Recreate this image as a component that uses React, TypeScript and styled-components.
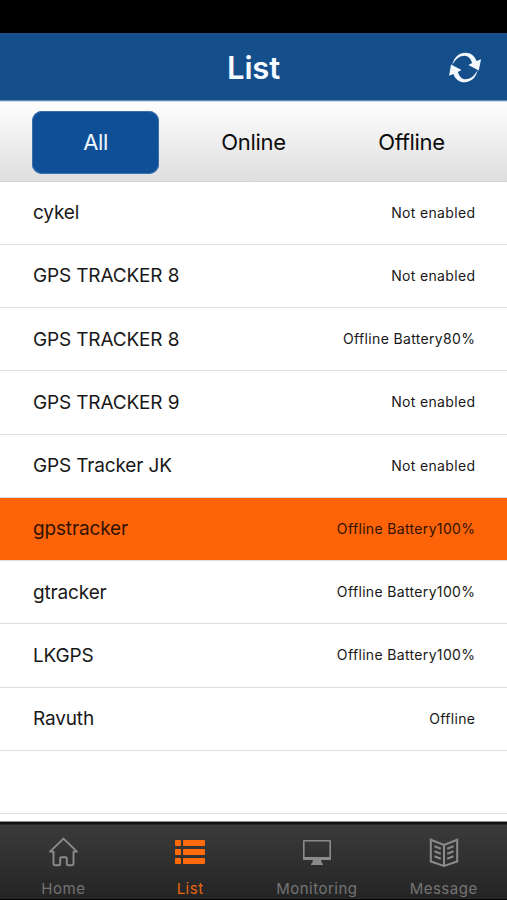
import React from 'react';
import styled, { createGlobalStyle } from 'styled-components';

const GlobalStyle = createGlobalStyle`
  * { box-sizing: border-box; }
  body { margin: 0; background: #000; }
  button { border: 0; padding: 0; background: none; font: inherit; color: inherit; }
`;

const Screen = styled.main`
  width: 507px;
  height: 900px;
  display: flex;
  flex-direction: column;
  overflow: hidden;
  background: #fff;
  color: #151515;
  font-family: Inter, 'Liberation Sans', sans-serif;
`;

const StatusBar = styled.div`
  height: 33px;
  flex: none;
  background: #000;
`;

const Header = styled.header`
  height: 69px;
  flex: none;
  display: grid;
  grid-template-columns: 1fr auto 1fr;
  align-items: center;
  background: linear-gradient(#1b5189 0, #154f8b 4px, #154f8b 67px, #6690b5 67px, #6690b5 68px, #c9dbe7 68px);
`;

const Title = styled.h1`
  grid-column: 2;
  margin: 0;
  color: #f4faff;
  font-size: 31px;
  line-height: 38px;
  font-weight: 600;
  letter-spacing: -0.2px;
`;

const Refresh = styled.button`
  justify-self: end;
  width: 34px;
  height: 31px;
  margin-right: 25px;
  svg { display: block; }
`;

const Filters = styled.nav`
  height: 79.5px;
  flex: none;
  display: flex;
  justify-content: space-between;
  padding: 9px 32px 0;
  background: linear-gradient(#fefefe, #dedede);
  border-bottom: 1px solid #d4d4d4;
`;

const Filter = styled.button<{ $active?: boolean }>`
  width: 127px;
  height: 63px;
  padding-bottom: 1px;
  border-radius: 10px;
  font-size: 22px;
  letter-spacing: ${p => (p.$active ? '-0.4px' : '-0.3px')};
  color: ${p => (p.$active ? '#eef6ff' : '#0c0c0c')};
  background: ${p => (p.$active ? '#0e4f97' : 'transparent')};
  box-shadow: ${p => (p.$active ? 'inset 0 0 0 1px #3a70ab' : 'none')};
`;

const Devices = styled.ul`
  flex: 1;
  min-height: 0;
  margin: 0;
  padding: 0;
  list-style: none;
`;

const Device = styled.li<{ $selected?: boolean }>`
  height: 63.25px;
  display: flex;
  align-items: center;
  justify-content: space-between;
  padding: 0 32px 0 33px;
  border-bottom: 1px solid #dedede;
  background: ${p => (p.$selected ? '#fd640a' : '#fff')};
  color: ${p => (p.$selected ? '#301300' : '#181818')};
`;

const DeviceName = styled.span`
  font-size: 19px;
  letter-spacing: -0.15px;
`;

const DeviceStatus = styled.span`
  font-size: 14px;
  padding-bottom: 1px;
  letter-spacing: 0.34px;
  margin-right: -0.34px;
`;

const TabBar = styled.nav`
  height: 79px;
  flex: none;
  display: grid;
  grid-template-columns: repeat(4, 1fr);
  border-top: 1px solid #8c8c8c;
  border-bottom: 1px solid #000;
  background: linear-gradient(#111 0, #111 2px, #3b3b3b 3px, #242424 100%);
`;

const Tab = styled.button<{ $active?: boolean }>`
  display: flex;
  flex-direction: column;
  align-items: center;
  padding-top: 14px;
  gap: 12px;
  color: ${p => (p.$active ? '#ff6a0d' : '#8b8b8b')};
  svg { display: block; flex: none; }
`;

const TabLabel = styled.span<{ $active?: boolean }>`
  font-size: 15px;
  line-height: 18px;
  letter-spacing: 0.5px;
  color: ${p => (p.$active ? '#e8670f' : '#747474')};
`;

const RefreshIcon = () => (
  <svg width="34" height="31" viewBox="0 0 34 32" fill="#f4f9fd">
    <path d="M4 13.3C5.3 5.4 11 .8 17.5 .8C23 .8 27.3 4.2 28.9 9.4L33.6 7.4L31.2 19L20.5 13.4L24.4 11.4C22.9 6.9 20.3 3.8 16.6 3.8C11.7 3.8 7.4 6.8 4 13.3Z" />
    <path d="M30 18.7C28.7 26.6 23 31.2 16.5 31.2C11 31.2 6.7 27.8 5.1 22.6L.6 24.6L2.6 13L13.4 18.6L9.6 20.6C11.1 25.1 13.7 28.2 17.4 28.2C22.3 28.2 26.6 25.2 30 18.7Z" />
  </svg>
);

const HomeIcon = () => (
  <svg width="32" height="32" viewBox="-.5 0 32 32" fill="none" stroke="currentColor" strokeWidth="1.9" strokeLinejoin="round">
    <path d="M16 2.6L2.5 15.6H6V27.5Q6 29.3 7.8 29.3H11.2Q12.7 29.3 12.7 27.5V22.3Q12.7 21.2 14 21.2H18Q19.3 21.2 19.3 22.3V27.5Q19.3 29.3 20.8 29.3H24.2Q26 29.3 26 27.5V15.6H29.5Z" />
  </svg>
);

const ListIcon = () => (
  <svg width="32" height="32" viewBox="0 0 32 32" fill="currentColor">
    {[4, 13, 22].map(y => (
      <g key={y}>
        <rect x="1" y={y} width="6" height="6" rx=".7" />
        <rect x="9" y={y} width="22" height="6" rx=".7" />
      </g>
    ))}
  </svg>
);

const MonitorIcon = () => (
  <svg width="32" height="32" viewBox="0 0 32 32" fill="currentColor">
    <path fillRule="evenodd" d="M3 4H29Q30 4 30 5V23Q30 24 29 24H20L21 27.5H22V29H10V27.5H11L12 24H3Q2 24 2 23V5Q2 4 3 4ZM3.6 5.6V21H28.4V5.6Z" />
  </svg>
);

const BookIcon = () => (
  <svg width="32" height="32" viewBox="0 0 32 32" fill="none" stroke="currentColor" strokeWidth="2">
    <path d="M2.8 3.8L16 9L29.2 3.8V25.5L16 30L2.8 25.5ZM16 9V30" />
    <path d="M6.5 10.2L12.8 12.7M6.5 15.2L12.8 17.7M6.5 20.2L12.8 22.7M25.5 10.2L19.2 12.7M25.5 15.2L19.2 17.7M25.5 20.2L19.2 22.7" />
  </svg>
);

const devices = [
  { name: 'cykel', status: 'Not enabled' },
  { name: 'GPS TRACKER 8', status: 'Not enabled' },
  { name: 'GPS TRACKER 8', status: 'Offline Battery80%' },
  { name: 'GPS TRACKER 9', status: 'Not enabled' },
  { name: 'GPS Tracker JK', status: 'Not enabled' },
  { name: 'gpstracker', status: 'Offline Battery100%', selected: true },
  { name: 'gtracker', status: 'Offline Battery100%' },
  { name: 'LKGPS', status: 'Offline Battery100%' },
  { name: 'Ravuth', status: 'Offline' },
  { name: '', status: '' },
];

const tabs = [
  { label: 'Home', Icon: HomeIcon },
  { label: 'List', Icon: ListIcon, active: true },
  { label: 'Monitoring', Icon: MonitorIcon },
  { label: 'Message', Icon: BookIcon },
];

export default function App() {
  return (
    <>
      <GlobalStyle />
      <Screen>
        <StatusBar />
        <Header>
          <Title>List</Title>
          <Refresh aria-label="Refresh"><RefreshIcon /></Refresh>
        </Header>
        <Filters>
          <Filter $active>All</Filter>
          <Filter>Online</Filter>
          <Filter>Offline</Filter>
        </Filters>
        <Devices>
          {devices.map((d, i) => (
            <Device key={i} $selected={d.selected}>
              <DeviceName>{d.name}</DeviceName>
              <DeviceStatus>{d.status}</DeviceStatus>
            </Device>
          ))}
        </Devices>
        <TabBar>
          {tabs.map(({ label, Icon, active }) => (
            <Tab key={label} $active={active}>
              <Icon />
              <TabLabel $active={active}>{label}</TabLabel>
            </Tab>
          ))}
        </TabBar>
      </Screen>
    </>
  );
}
